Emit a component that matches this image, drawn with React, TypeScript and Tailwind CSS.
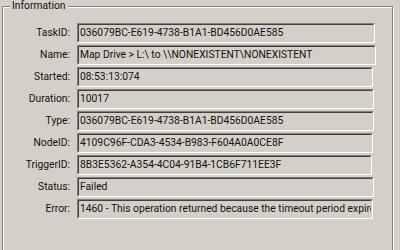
const rows: { label: string; value: string; w: string }[] = [
  { label: "TaskID:", value: "036079BC-E619-4738-B1A1-BD456D0AE585", w: "w-[298px]" },
  { label: "Name:", value: "Map Drive > L:\\ to \\\\NONEXISTENT\\NONEXISTENT", w: "w-[299px]" },
  { label: "Started:", value: "08:53:13:074", w: "w-[296px]" },
  { label: "Duration:", value: "10017", w: "w-[297px]" },
  { label: "Type:", value: "036079BC-E619-4738-B1A1-BD456D0AE585", w: "w-[297px]" },
  { label: "NodeID:", value: "4109C96F-CDA3-4534-B983-F604A0A0CE8F", w: "w-[296px]" },
  { label: "TriggerID:", value: "8B3E5362-A354-4C04-91B4-1CB6F711EE3F", w: "w-[295px]" },
  { label: "Status:", value: "Failed", w: "w-[297px]" },
  { label: "Error:", value: "1460 - This operation returned because the timeout period expired.", w: "w-[296px]" },
];

function Field({ value, w }: { value: string; w: string }) {
  return (
    <div
      className={`${w} h-[20px] border border-t-[#808080] border-l-[#808080] border-b-white border-r-white bg-[#d4d0c8]`}
    >
      <div className="h-full border border-t-[#404040] border-l-[#404040] border-b-[#d4d0c8] border-r-[#d4d0c8] overflow-hidden whitespace-nowrap pl-[1px] leading-[16px]">
        {value}
      </div>
    </div>
  );
}

export default function App() {
  return (
    <div
      className="w-[400px] h-[250px] overflow-hidden bg-[#d4d0c8] text-[10.3px] text-[#111]"
      style={{ fontFamily: 'Roboto, "Liberation Sans", Arial, sans-serif' }}
    >
      <div className="relative ml-[2px] mt-[6px] w-[391px] h-[260px] border border-[#808080] shadow-[inset_1px_1px_0_#fff,1px_1px_0_#fff]">
        <span className="absolute left-[7px] -top-[8px] bg-[#d4d0c8] px-[2px] leading-[14px]">
          Information
        </span>
        <div className="flex flex-col gap-[2px] pt-[16px]">
          {rows.map((r) => (
            <div key={r.label} className="flex items-center">
              <div className="w-[68px] text-right pr-[1px]">{r.label}</div>
              <div className="ml-[6px]">
                <Field value={r.value} w={r.w} />
              </div>
            </div>
          ))}
        </div>
      </div>
    </div>
  );
}
